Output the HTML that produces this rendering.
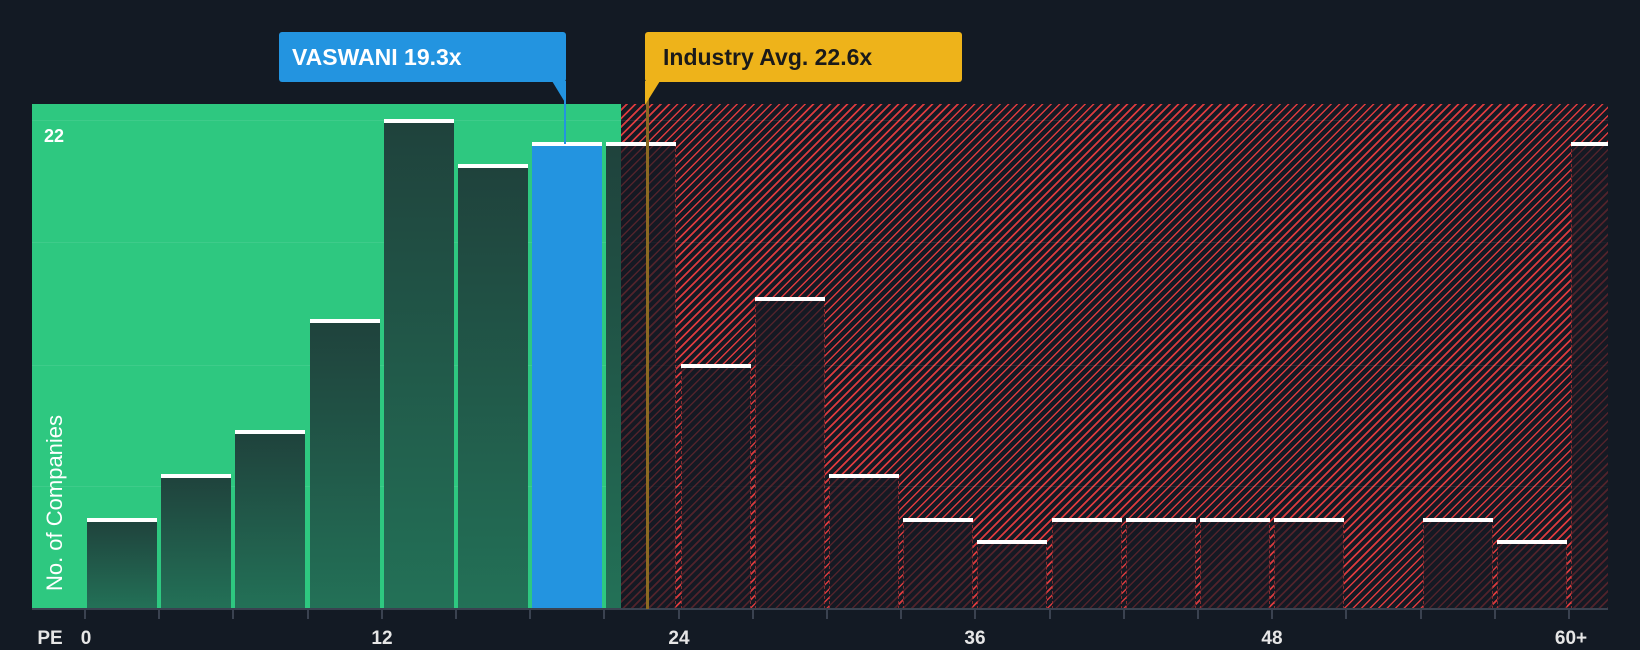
<!DOCTYPE html>
<html><head><meta charset="utf-8"><style>
body{margin:0;width:1640px;height:650px;background:#131a24;position:relative;overflow:hidden;font-family:"Liberation Sans",sans-serif}
div{position:absolute;box-sizing:border-box}
.g{left:32px;width:1576px;height:1px;background:rgba(255,255,255,0.08)}
.b{width:70px;bottom:41px}
.gb{background:linear-gradient(#1f423c,#237157)}
.rb{background:rgba(22,26,36,0.7);border-left:1px dashed rgba(230,60,60,0.55);border-right:1px dashed rgba(230,60,60,0.55)}
.cap{height:4px;background:#fff;width:70px}
.t{top:610px;width:2px;height:9px;background:#3a4250}
.xl{top:628px;color:#e6e6e6;font-weight:bold;font-size:19px;transform:translateX(-50%)}
</style></head><body>
<div style="left:32px;top:104px;width:589px;height:505px;background:#2ec880"></div>
<div style="left:621px;top:104px;width:987px;height:505px;background:repeating-linear-gradient(-45deg,#dc3b3e 0 1.6px,#141a24 1.6px 6px)"></div>
<div class="g" style="top:120px"></div><div class="g" style="top:242px"></div><div class="g" style="top:365px"></div><div class="g" style="top:486px"></div>

<div class="b gb" style="left:87px;top:520px"></div><div class="cap" style="left:87px;top:518px"></div>
<div class="b gb" style="left:161px;top:476px"></div><div class="cap" style="left:161px;top:474px"></div>
<div class="b gb" style="left:235px;top:432px"></div><div class="cap" style="left:235px;top:430px"></div>
<div class="b gb" style="left:310px;top:321px"></div><div class="cap" style="left:310px;top:319px"></div>
<div class="b gb" style="left:384px;top:121px"></div><div class="cap" style="left:384px;top:119px"></div>
<div class="b gb" style="left:458px;top:166px"></div><div class="cap" style="left:458px;top:164px"></div>
<div class="b" style="left:532px;top:144px;background:#2394e0"></div><div class="cap" style="left:532px;top:142px"></div>
<div class="b gb" style="left:606px;top:144px;width:15px"></div>
<div class="b rb" style="left:621px;top:144px;width:55px;border-left:none"></div><div class="cap" style="left:606px;top:142px"></div>
<div class="b rb" style="left:681px;top:366px"></div><div class="cap" style="left:681px;top:364px"></div>
<div class="b rb" style="left:755px;top:299px"></div><div class="cap" style="left:755px;top:297px"></div>
<div class="b rb" style="left:829px;top:476px"></div><div class="cap" style="left:829px;top:474px"></div>
<div class="b rb" style="left:903px;top:520px"></div><div class="cap" style="left:903px;top:518px"></div>
<div class="b rb" style="left:977px;top:542px"></div><div class="cap" style="left:977px;top:540px"></div>
<div class="b rb" style="left:1052px;top:520px"></div><div class="cap" style="left:1052px;top:518px"></div>
<div class="b rb" style="left:1126px;top:520px"></div><div class="cap" style="left:1126px;top:518px"></div>
<div class="b rb" style="left:1200px;top:520px"></div><div class="cap" style="left:1200px;top:518px"></div>
<div class="b rb" style="left:1274px;top:520px"></div><div class="cap" style="left:1274px;top:518px"></div>
<div class="b rb" style="left:1423px;top:520px"></div><div class="cap" style="left:1423px;top:518px"></div>
<div class="b rb" style="left:1497px;top:542px"></div><div class="cap" style="left:1497px;top:540px"></div>
<div class="b rb" style="left:1571px;top:144px;width:37px;border-right:none"></div><div class="cap" style="left:1571px;top:142px;width:37px"></div>

<div style="left:32px;top:608px;width:1576px;height:2px;background:#3a4250"></div>
<div class="t" style="left:84px"></div><div class="t" style="left:158px"></div><div class="t" style="left:232px"></div><div class="t" style="left:307px"></div><div class="t" style="left:381px"></div><div class="t" style="left:455px"></div><div class="t" style="left:529px"></div><div class="t" style="left:603px"></div><div class="t" style="left:678px"></div><div class="t" style="left:752px"></div><div class="t" style="left:826px"></div><div class="t" style="left:900px"></div><div class="t" style="left:974px"></div><div class="t" style="left:1049px"></div><div class="t" style="left:1123px"></div><div class="t" style="left:1197px"></div><div class="t" style="left:1271px"></div><div class="t" style="left:1345px"></div><div class="t" style="left:1420px"></div><div class="t" style="left:1494px"></div><div class="t" style="left:1568px"></div>

<div style="left:646px;top:82px;width:3px;height:527px;background:#8b6a22"></div>
<div style="left:564px;top:82px;width:2px;height:62px;background:#2394e0"></div>
<svg style="position:absolute;left:0;top:0" width="1640" height="650"><polygon points="552,81 566,81 566,104" fill="#2394e0"/><polygon points="645,81 660,81 645,105" fill="#eeb31a"/></svg>
<div style="left:279px;top:32px;width:287px;height:50px;background:#2394e0;border-radius:3px;color:#fff;font-size:23px;font-weight:bold;line-height:50px;padding-left:13px">VASWANI 19.3x</div>
<div style="left:645px;top:32px;width:317px;height:50px;background:#eeb31a;border-radius:3px;color:#1a1a1a;font-size:23px;font-weight:bold;line-height:50px;padding-left:18px">Industry Avg. 22.6x</div>

<div style="left:44px;top:126px;color:#fff;font-weight:bold;font-size:18px">22</div>
<div style="left:55px;top:503px;color:#fff;font-size:22px;white-space:nowrap;transform:translate(-50%,-50%) rotate(-90deg)">No. of Companies</div>
<div class="xl" style="left:50px">PE</div>
<div class="xl" style="left:86px">0</div>
<div class="xl" style="left:382px">12</div>
<div class="xl" style="left:679px">24</div>
<div class="xl" style="left:975px">36</div>
<div class="xl" style="left:1272px">48</div>
<div class="xl" style="left:1571px">60+</div>
</body></html>
